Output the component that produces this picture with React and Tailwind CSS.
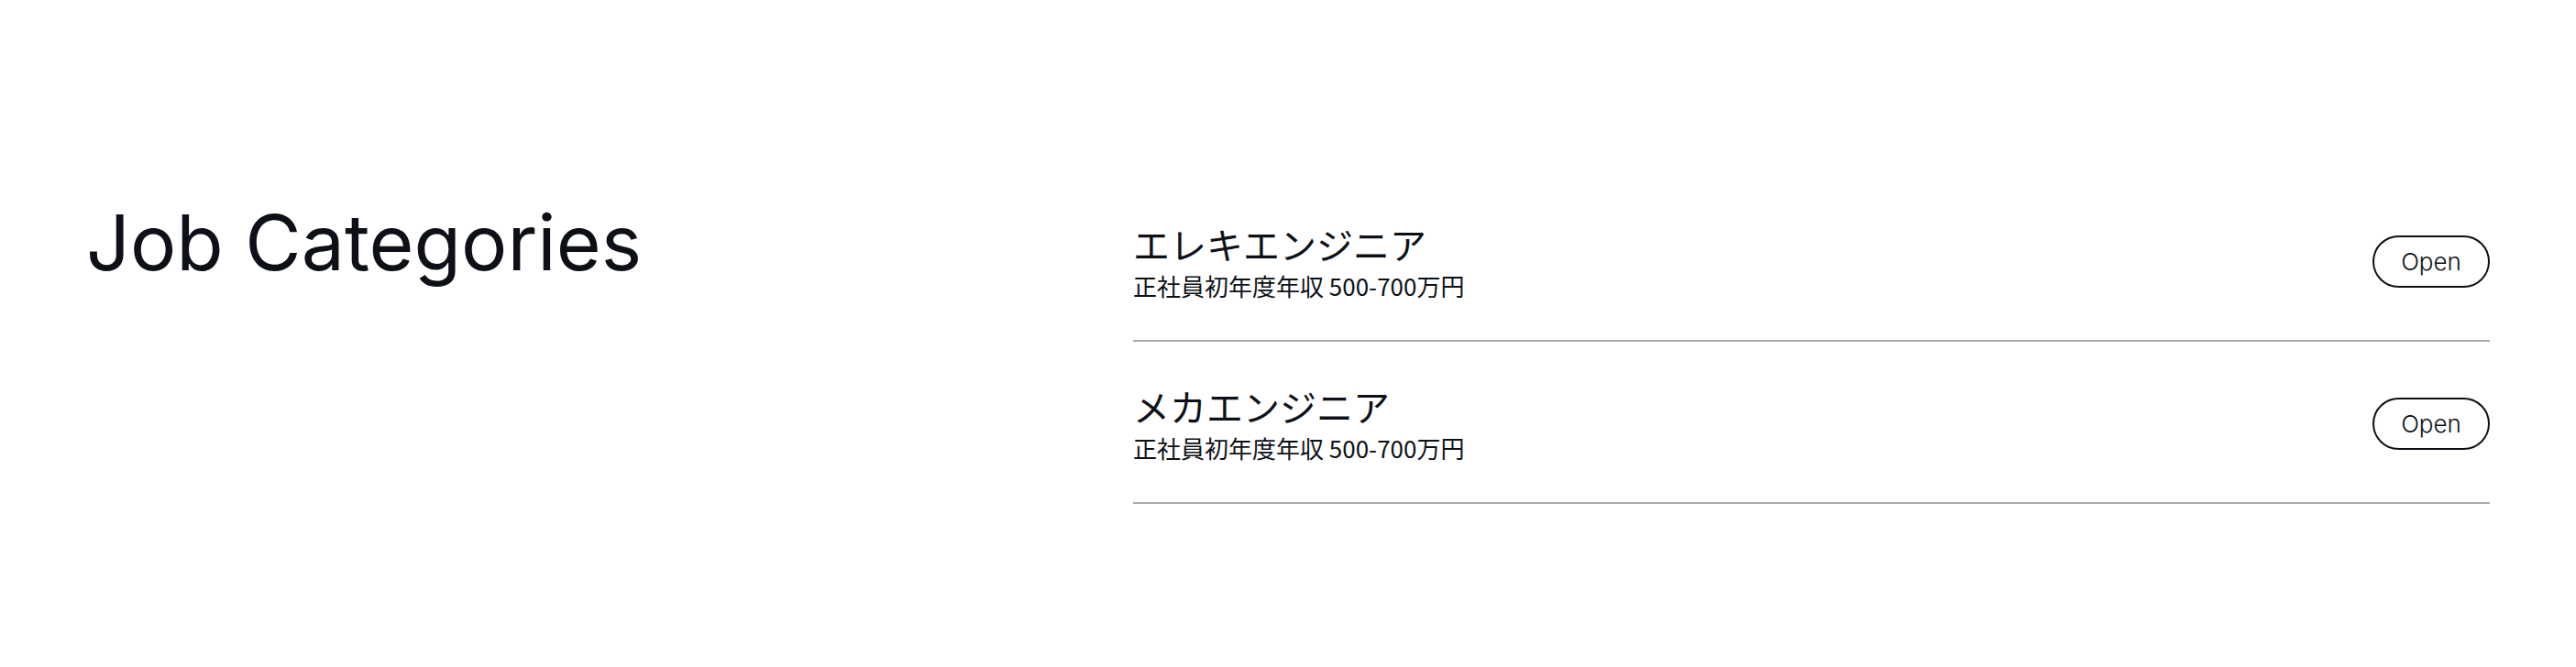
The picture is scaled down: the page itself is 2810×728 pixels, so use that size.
import React from "react";

// Job category rows.
const jobs = [
    { title: "エレキエンジニア", salary: "正社員初年度年収 500-700万円" },
    { title: "メカエンジニア", salary: "正社員初年度年収 500-700万円" },
];

function JobRow(props) {
    return (
        <div className="flex flex-row items-center justify-between border-b-2 border-[#aaaaaa] pt-[46px] pb-[43px]">
            <div className="flex flex-col" style={{ fontFamily: '"Noto Sans CJK JP", "Noto Sans", sans-serif' }}>
                <p className="text-[40px] leading-[48px] text-[#0d1117]">{props.title}</p>
                <p className="mt-[6px] text-[26px] leading-[32px] text-[#0d1117]">{props.salary}</p>
            </div>
            <button className="w-[128px] h-[57px] rounded-full border-2 border-[#0d1117] text-[26px] font-light text-[#0d1117] font-['Inter',sans-serif]">
                Open
            </button>
        </div>
    );
}

function App() {
    return (
        <div className="w-full h-[728px] bg-white flex flex-row pl-[88px] pr-[94px] pt-[196px]">
            <div className="w-[1148px] shrink-0 pl-[6px]">
                <h2 className="mt-[25px] text-[84px] leading-[88px] text-[#0d1117] font-['Inter',sans-serif]">
                    Job Categories
                </h2>
            </div>
            <div className="flex-1 flex flex-col">
                {jobs.map((job, index) => (
                    <JobRow key={index} title={job.title} salary={job.salary} />
                ))}
            </div>
        </div>
    );
}

export default App;
